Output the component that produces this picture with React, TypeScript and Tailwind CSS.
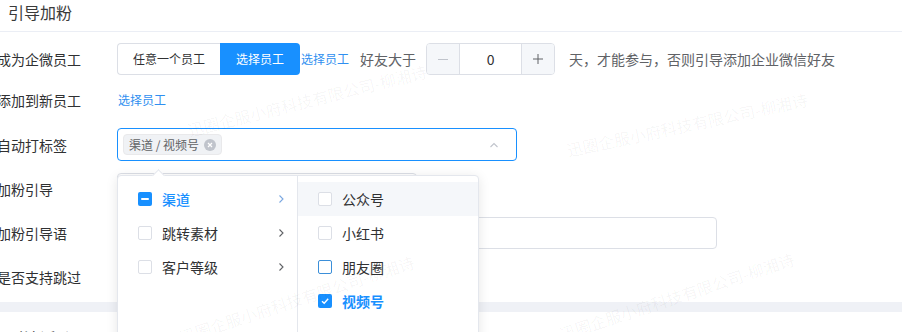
import React from "react";

const FONT = '"Noto Sans CJK SC", "Noto Sans", sans-serif';

function Chevron({ up = false, className = "" }: { up?: boolean; className?: string }) {
  return (
    <svg width="12" height="12" viewBox="0 0 12 12" className={className} fill="none">
      {up ? (
        <path d="M2.5 8 L6 4.5 L9.5 8" stroke="currentColor" strokeWidth="1.1" />
      ) : (
        <path d="M4.5 2.5 L8 6 L4.5 9.5" stroke="currentColor" strokeWidth="1.1" />
      )}
    </svg>
  );
}

function Box({ state, hoverBorder = false }: { state: "none" | "ind" | "checked"; hoverBorder?: boolean }) {
  if (state === "ind")
    return (
      <span className="w-[14px] h-[14px] rounded-[2px] bg-[#1890ff] flex items-center justify-center shrink-0">
        <span className="w-[8px] h-[2px] bg-white rounded-[1px]" />
      </span>
    );
  if (state === "checked")
    return (
      <span className="w-[14px] h-[14px] rounded-[2px] bg-[#1890ff] flex items-center justify-center shrink-0">
        <svg width="10" height="10" viewBox="0 0 10 10">
          <path d="M2 5.2 L4.2 7.3 L8.2 2.8" stroke="#fff" strokeWidth="1.4" fill="none" />
        </svg>
      </span>
    );
  return (
    <span
      className={
        "w-[14px] h-[14px] rounded-[2px] border bg-white shrink-0 " +
        (hoverBorder ? "border-[#3b8fd9]" : "border-[#dcdfe6]")
      }
    />
  );
}

function Row({ label, children, className = "" }: { label: string; children?: React.ReactNode; className?: string }) {
  return (
    <div className={"flex items-center h-[32px] " + className}>
      <div className="w-[120px] ml-[-3px] shrink-0 text-[14px] text-[#303133] leading-[20px] whitespace-nowrap">
        {label}
      </div>
      {children}
    </div>
  );
}

function Watermark({ left, top, rotate }: { left: number; top: number; rotate: number }) {
  return (
    <div
      className="absolute text-[16px] text-black/[0.045] whitespace-nowrap pointer-events-none origin-left"
      style={{ left, top, transform: `rotate(${rotate}deg)` }}
    >
      迅圈企服小府科技有限公司-柳湘诗
    </div>
  );
}

export default function App() {
  return (
    <div className="relative w-[902px] h-[332px] overflow-hidden bg-white" style={{ fontFamily: FONT }}>
      <div className="h-[32px] box-border border-b border-[#ebeef5] pl-[8px] pt-[1px] text-[16px] leading-[22px] text-[#3a3a3a]">
        引导加粉
      </div>

      <div className="relative">
        <Row label="成为企微员工" className="mt-[11px]">
          <div className="flex h-[32px] text-[12px]">
            <div className="w-[103px] h-[32px] border border-[#dcdfe6] border-r-0 rounded-l-[4px] flex items-center justify-center text-[#303133]">
              任意一个员工
            </div>
            <div className="w-[80px] h-[32px] bg-[#1890ff] rounded-r-[4px] flex items-center justify-center text-white">
              选择员工
            </div>
          </div>
          <span className="ml-[1px] text-[12px] text-[#2f8ff0]">选择员工</span>
          <span className="ml-[11px] text-[14px] text-[#606266]">好友大于</span>
          <div className="ml-[10px] w-[129px] h-[32px] border border-[#dcdfe6] rounded-[4px] flex overflow-hidden">
            <div className="w-[33px] bg-[#f5f7fa] border-r border-[#dcdfe6] flex items-center justify-center text-[#c0c4cc]">
              <span className="w-[10px] h-[1px] bg-[#c0c4cc]" />
            </div>
            <div className="flex-1 flex items-center justify-center text-[14px] text-[#303133]">0</div>
            <div className="w-[33px] bg-[#f5f7fa] border-l border-[#dcdfe6] flex items-center justify-center">
              <svg width="12" height="12" viewBox="0 0 12 12">
                <path d="M6 1 V11 M1 6 H11" stroke="#606266" strokeWidth="1" />
              </svg>
            </div>
          </div>
          <span className="ml-[14px] text-[14px] text-[#606266] whitespace-nowrap">
            天，才能参与，否则引导添加企业微信好友
          </span>
        </Row>

        <Row label="添加到新员工" className="mt-[9px]">
          <span className="ml-[1px] text-[12px] text-[#2f8ff0]">选择员工</span>
        </Row>

        <Row label="自动打标签" className="mt-[12px] !h-[33px]">
          <div className="w-[400px] h-[33px] border border-[#1890ff] rounded-[4px] flex items-center pl-[5px] pr-[16px]">
            <span className="h-[21px] px-[5px] bg-[#f0f2f5] border border-[#e9e9eb] rounded-[4px] flex items-center gap-[5px] text-[12px] text-[#606266]">
              渠道 / 视频号
              <span className="w-[12px] h-[12px] rounded-full bg-[#c0c4cc] flex items-center justify-center">
                <svg width="8" height="8" viewBox="0 0 8 8">
                  <path d="M2 2 L6 6 M6 2 L2 6" stroke="#fff" strokeWidth="1.2" />
                </svg>
              </span>
            </span>
            <span className="flex-1" />
            <Chevron up className="text-[#c0c4cc]" />
          </div>
        </Row>

        <Row label="加粉引导" className="mt-[12px]">
          <div className="w-[300px] h-[32px] border border-[#dcdfe6] rounded-[4px]" />
        </Row>

        <Row label="加粉引导语" className="mt-[12px]">
          <div className="w-[600px] h-[32px] border border-[#dcdfe6] rounded-[4px]" />
        </Row>

        <Row label="是否支持跳过" className="mt-[12px]" />

        <div className="mt-[9px] h-[10px] bg-[#eff1f6]" />
        <div className="pl-[8px] pt-[15px] text-[16px] leading-[22px] text-[#303133]">引流活动页面</div>

        {/* Cascader popup */}
        <div className="absolute left-[117px] top-[132px] w-[362px] h-[180px] bg-white border border-[#e4e7ed] rounded-[4px] shadow-[0_2px_12px_rgba(0,0,0,0.1)] flex">
          <div className="absolute left-[36px] top-[-5px] w-[9px] h-[9px] bg-white border-l border-t border-[#e4e7ed] rotate-45" />
          <div className="w-[180px] border-r border-[#e4e7ed] pt-[6px] text-[14px]">
            {[
              { t: "渠道", s: "ind" as const, active: true },
              { t: "跳转素材", s: "none" as const },
              { t: "客户等级", s: "none" as const },
            ].map((it) => (
              <div key={it.t} className="h-[34px] flex items-center pl-[20px] pr-[10px]">
                <Box state={it.s} />
                <span className={"ml-[10px] flex-1 " + (it.active ? "text-[#1890ff] font-medium" : "text-[#303133]")}>
                  {it.t}
                </span>
                <Chevron className={it.active ? "text-[#7aa7e0]" : "text-[#606266]"} />
              </div>
            ))}
          </div>
          <div className="flex-1 pt-[6px] text-[14px]">
            <div className="h-[34px] flex items-center pl-[20px] bg-[#f5f7fa]">
              <Box state="none" />
              <span className="ml-[10px] text-[#303133]">公众号</span>
            </div>
            <div className="h-[34px] flex items-center pl-[20px]">
              <Box state="none" />
              <span className="ml-[10px] text-[#303133]">小红书</span>
            </div>
            <div className="h-[34px] flex items-center pl-[20px]">
              <Box state="none" hoverBorder />
              <span className="ml-[10px] text-[#303133]">朋友圈</span>
            </div>
            <div className="h-[34px] flex items-center pl-[20px]">
              <Box state="checked" />
              <span className="ml-[10px] text-[#1890ff] font-semibold">视频号</span>
            </div>
          </div>
        </div>
      </div>

      <Watermark left={188} top={118} rotate={-14} />
      <Watermark left={567} top={138} rotate={-12} />
      <Watermark left={180} top={325} rotate={-18} />
      <Watermark left={560} top={322} rotate={-18} />
    </div>
  );
}
